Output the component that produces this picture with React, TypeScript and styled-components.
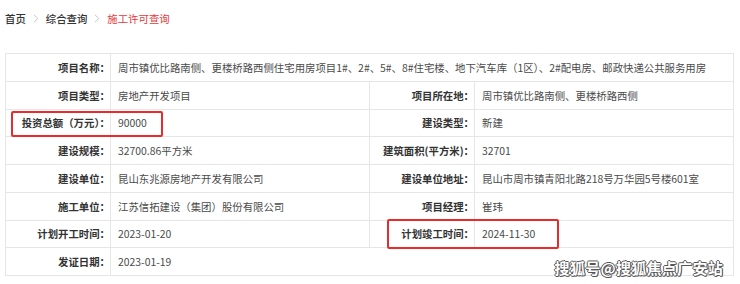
import { Fragment } from 'react'
import styled, { createGlobalStyle } from 'styled-components'

const GlobalStyle = createGlobalStyle`
  html, body {
    margin: 0;
    padding: 0;
    background: #fff;
  }
  body {
    font-family: "Noto Sans CJK SC", "Noto Sans", "Liberation Sans", sans-serif;
    -webkit-font-smoothing: antialiased;
  }
`

const Page = styled.div`
  position: relative;
  width: 740px;
  height: 284px;
  padding-left: 5px;
  box-sizing: border-box;
  overflow: hidden;
`

const Breadcrumb = styled.nav`
  display: flex;
  align-items: center;
  gap: 6px;
  height: 36px;
  font-size: 10.4px;
  color: #333;
`

const Crumb = styled.span<{ $active?: boolean }>`
  color: ${(p) => (p.$active ? '#e3393c' : '#333')};
  font-weight: ${(p) => (p.$active ? 400 : 500)};
`

const Sep = styled.svg`
  width: 6px;
  height: 9px;
  margin: 0 1px;
`

const Table = styled.div`
  display: grid;
  grid-template-columns: 105px 259px 105px 259px;
  grid-auto-rows: 27.75px;
  margin-top: 17px;
  width: 729px;
  box-sizing: border-box;
  border-top: 1px solid #e6e6e6;
  border-left: 1px solid #e6e6e6;
`

const Cell = styled.div`
  display: flex;
  align-items: center;
  box-sizing: border-box;
  border-right: 1px solid #e6e6e6;
  border-bottom: 1px solid #e6e6e6;
  font-size: 10.4px;
  white-space: nowrap;
  overflow: hidden;
`

const Label = styled(Cell)`
  justify-content: flex-end;
  padding-right: 0;
  color: #333;
  font-weight: 700;
`

const Value = styled(Cell)<{ $span?: number }>`
  grid-column: span ${(p) => p.$span ?? 1};
  padding-left: 7px;
  color: #4a4a4a;
`

const Highlight = styled.div`
  position: absolute;
  box-sizing: border-box;
  border: 2px solid #ea2b2b;
  border-radius: 2px;
`

const Watermark = styled.div`
  position: absolute;
  right: 17px;
  top: 257px;
  font-size: 15px;
  font-weight: 700;
  letter-spacing: 0.3px;
  color: #fff;
  text-shadow:
    1px 0 0 #555,
    -1px 0 0 #555,
    0 1px 0 #555,
    0 -1px 0 #555,
    1px 1px 0 #777;
`

type Row =
  | { label: string; value: string; span: true }
  | { label: string; value: string; label2: string; value2: string }

const rows: Row[] = [
  {
    label: '项目名称：',
    value:
      '周市镇优比路南侧、更楼桥路西侧住宅用房项目1#、2#、5#、8#住宅楼、地下汽车库（1区）、2#配电房、邮政快递公共服务用房',
    span: true,
  },
  { label: '项目类型：', value: '房地产开发项目', label2: '项目所在地：', value2: '周市镇优比路南侧、更楼桥路西侧' },
  { label: '投资总额（万元）：', value: '90000', label2: '建设类型：', value2: '新建' },
  { label: '建设规模：', value: '32700.86平方米', label2: '建筑面积(平方米)：', value2: '32701' },
  {
    label: '建设单位：',
    value: '昆山东兆源房地产开发有限公司',
    label2: '建设单位地址：',
    value2: '昆山市周市镇青阳北路218号万华园5号楼601室',
  },
  { label: '施工单位：', value: '江苏信拓建设（集团）股份有限公司', label2: '项目经理：', value2: '崔玮' },
  { label: '计划开工时间：', value: '2023-01-20', label2: '计划竣工时间：', value2: '2024-11-30' },
  { label: '发证日期：', value: '2023-01-19', span: true },
]

const Chevron = () => (
  <Sep viewBox="0 0 6 9">
    <path d="M1 0.8 L4.8 4.5 L1 8.2" fill="none" stroke="#c4c4c4" strokeWidth="1" />
  </Sep>
)

export default function App() {
  return (
    <>
      <GlobalStyle />
      <Page>
        <Breadcrumb>
          <Crumb>首页</Crumb>
          <Chevron />
          <Crumb>综合查询</Crumb>
          <Chevron />
          <Crumb $active>施工许可查询</Crumb>
        </Breadcrumb>

        <Table>
          {rows.map((r) => (
            <Fragment key={r.label}>
              <Label>{r.label}</Label>
              {'span' in r ? (
                <Value $span={3}>{r.value}</Value>
              ) : (
                <>
                  <Value>{r.value}</Value>
                  <Label>{r.label2}</Label>
                  <Value>{r.value2}</Value>
                </>
              )}
            </Fragment>
          ))}
        </Table>

        {/* red annotation boxes drawn over the table */}
        <Highlight style={{ left: 11, top: 111, width: 152, height: 26 }} />
        <Highlight style={{ left: 387, top: 219, width: 172, height: 30 }} />
        <Watermark>搜狐号@搜狐焦点广安站</Watermark>
      </Page>
    </>
  )
}
